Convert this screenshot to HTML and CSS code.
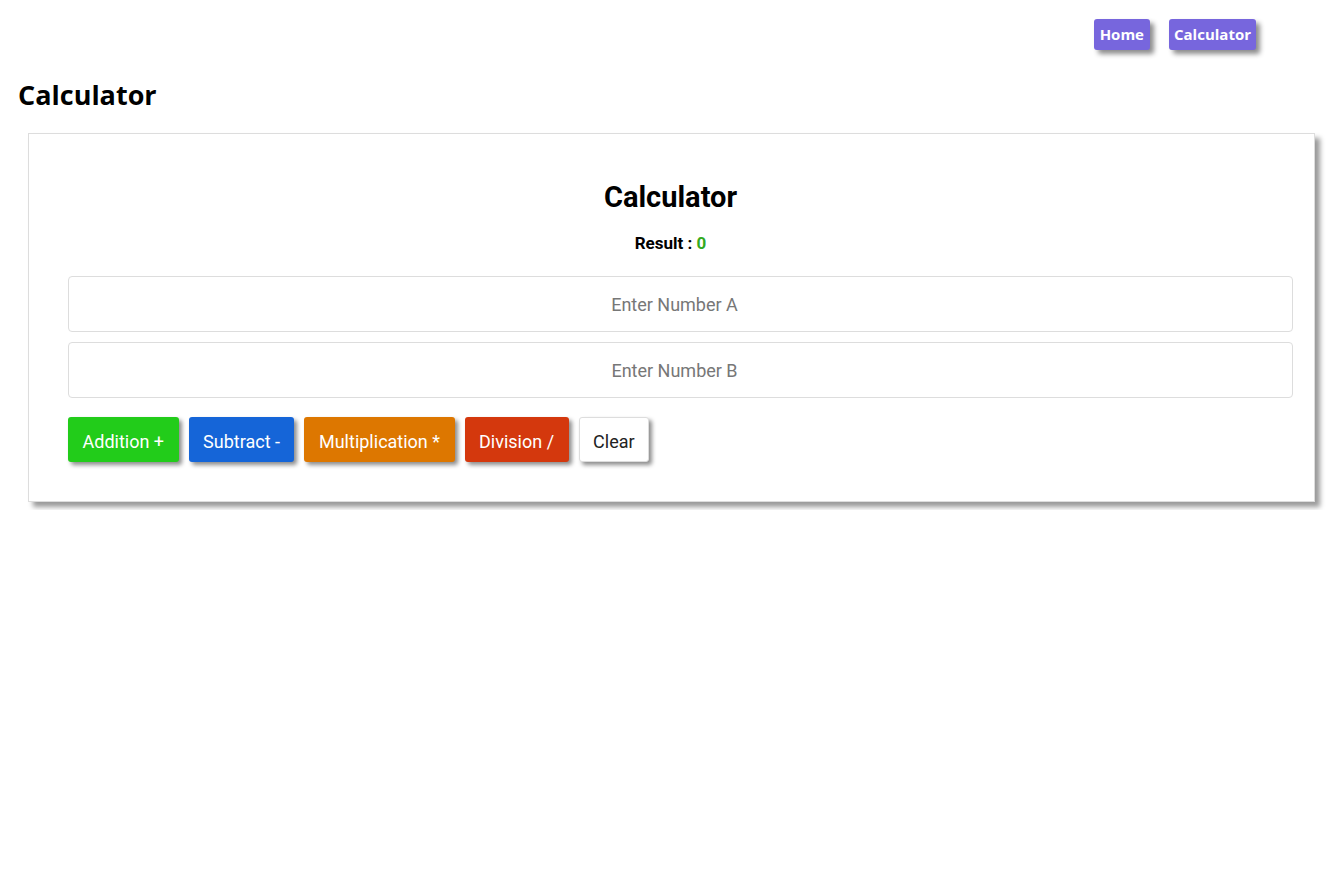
FILE: index.html
```html
<!DOCTYPE html>
<html>
<head>
<meta charset="utf-8">
<link rel="stylesheet" href="styles.css">
</head>
<body>
<nav class="nav">
  <a class="nav-btn">Home</a>
  <a class="nav-btn">Calculator</a>
</nav>
<h1 class="page-title">Calculator</h1>
<div class="card">
  <h2 class="card-title">Calculator</h2>
  <p class="result">Result : <span class="result-value">0</span></p>
  <input class="field" type="text" placeholder="Enter Number A">
  <input class="field" type="text" placeholder="Enter Number B">
  <div class="buttons">
    <button class="btn btn-add">Addition +</button>
    <button class="btn btn-sub">Subtract -</button>
    <button class="btn btn-mul">Multiplication *</button>
    <button class="btn btn-div">Division /</button>
    <button class="btn btn-clear">Clear</button>
  </div>
</div>
</body>
</html>
```
FILE: styles.css
```css
html, body {
  margin: 0;
  padding: 0;
  background: #fff;
}
body {
  padding: 8px;
  font-family: "Open Sans", "Noto Sans", sans-serif;
}
.nav {
  display: flex;
  justify-content: flex-end;
  gap: 19px;
  padding-top: 11px;
  padding-right: 78px;
}
.nav-btn {
  display: block;
  background: #7766dd;
  color: #fff;
  font-weight: 700;
  font-size: 15px;
  line-height: 20px;
  padding: 5px 6px 6px;
  border-radius: 3px;
  box-shadow: 4px 4px 5px rgba(0,0,0,0.45);
  cursor: pointer;
}
.nav-btn + .nav-btn {
  padding: 5px 5px 6px;
}
.page-title {
  margin: 27px 0 0 10px;
  font-size: 27px;
  line-height: 36px;
  font-weight: 700;
  color: #000;
}
.card {
  margin: 20px 19px 0 20px;
  border: 1px solid #ddd;
  box-shadow: 5px 5px 5px rgba(0,0,0,0.4);
  padding: 39px 21px 39px 39px;
  display: flex;
  flex-direction: column;
  font-family: Roboto, "Noto Sans", sans-serif;
}
.card-title {
  margin: 6px 0 0;
  text-align: center;
  font-size: 29px;
  line-height: 36px;
  font-weight: 700;
  padding-right: 20px;
}
.result {
  margin: 18px 0 0;
  text-align: center;
  font-size: 17px;
  font-weight: 700;
  line-height: 20px;
  padding-right: 20px;
}
.result-value {
  color: #33aa22;
}
.field {
  display: block;
  box-sizing: border-box;
  width: 100%;
  height: 56px;
  border: 1px solid #ddd;
  border-radius: 4px;
  text-align: center;
  font-family: Roboto, sans-serif;
  font-size: 18px;
  padding: 0 12px 0 0;
  margin: 0;
  outline: none;
}
.result + .field {
  margin-top: 23px;
}
.field + .field {
  margin-top: 10px;
}
.field::placeholder {
  color: #777;
}
.buttons {
  display: flex;
  gap: 10px;
  margin-top: 19px;
}
.btn {
  height: 45px;
  padding: 3px 13.5px 0;
  border: 1px solid transparent;
  border-radius: 3px;
  font-family: Roboto, sans-serif;
  font-size: 18px;
  color: #fff;
  box-shadow: 3px 3px 4px rgba(0,0,0,0.45);
  cursor: pointer;
}
.btn-add { background: #22cc1a; }
.btn-sub { background: #1565d8; }
.btn-mul { background: #dd7700; }
.btn-div { background: #d4380d; }
.btn-clear {
  background: #fff;
  color: #222;
  border-color: #ddd;
}
```
